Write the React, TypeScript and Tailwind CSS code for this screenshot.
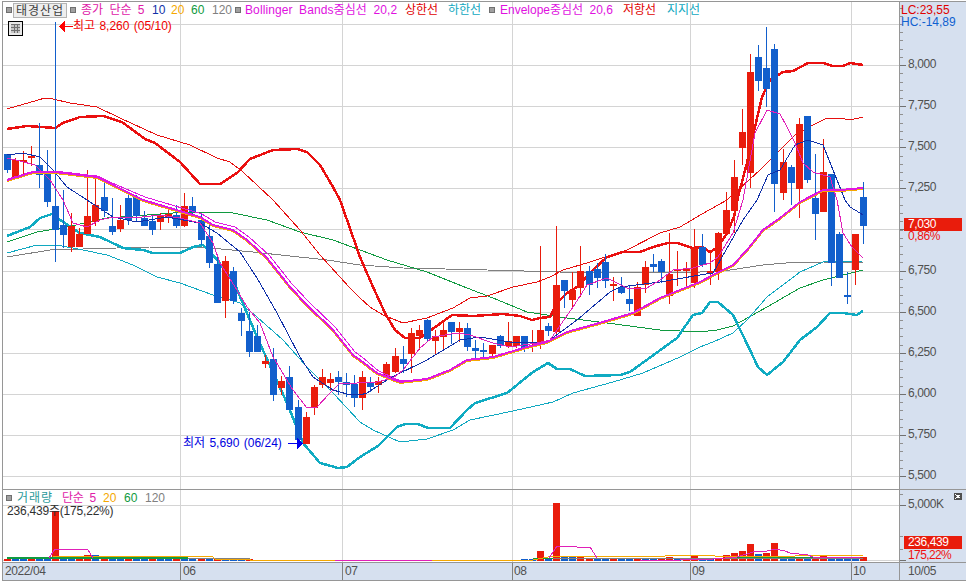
import React from "react";

type C = [number, 0 | 1, number, number, number, number];
// x, 1=red 0=blue, wick top, body top, body bottom, wick bottom
const candles: C[] = [
  [7,0,154,154,170,173],[15,1,158,160,178,178],[23,1,151,160,162,177],[31,1,146,156,158,166],[39,0,123,165,175,188],[47,0,150,174,202,207],
  [55,0,22,206,230,262],[63,0,190,225,235,248],[71,1,213,226,247,252],[79,1,228,234,247,247],[87,1,170,216,234,234],[95,1,177,205,222,226],
  [104,0,182,197,211,217],[112,0,198,226,232,235],[120,1,205,220,229,232],[128,0,195,198,220,225],[136,0,195,197,216,221],[144,0,211,218,226,226],
  [152,0,215,221,230,235],[160,1,213,216,222,230],[168,1,208,214,217,223],[176,0,205,215,226,228],[184,1,193,206,226,227],[192,0,197,206,212,214],
  [201,0,213,220,240,245],[209,0,225,236,263,268],[217,0,256,264,303,303],[225,1,256,261,301,318],[233,0,267,271,301,304],[241,0,308,313,321,336],
  [249,0,312,331,352,357],[257,0,325,336,352,352],[265,1,355,361,364,368],[273,0,348,359,395,401],[281,1,376,381,388,395],[289,0,366,377,410,410],
  [298,0,400,407,440,440],[306,1,412,417,444,444],[314,1,385,387,408,415],[322,1,369,377,385,388],[330,1,373,379,383,390],[338,0,371,377,382,395],
  [346,0,373,382,385,397],[354,0,375,384,398,407],[362,1,371,377,398,410],[370,0,377,382,387,392],[378,1,377,381,385,393],[386,1,362,364,377,380],
  [395,1,348,356,372,373],[403,0,346,359,364,373],[411,1,328,333,354,373],[419,1,325,330,336,350],[427,0,319,320,339,342],[435,1,330,336,341,354],
  [443,1,320,330,337,349],[451,0,322,322,332,344],[459,1,322,328,332,342],[467,0,323,328,347,351],[475,0,340,348,351,359],[483,0,343,350,352,360],
  [492,1,345,345,354,357],[500,0,335,336,346,348],[508,1,322,341,346,348],[516,1,336,336,346,348],[524,0,336,336,349,352],[532,1,330,345,347,352],
  [540,1,246,330,343,349],[548,0,323,326,331,336],[556,1,226,285,332,336],[564,0,280,280,291,308],[572,1,272,290,300,308],[580,1,246,271,288,297],
  [589,0,266,271,285,295],[597,0,263,269,278,288],[605,0,254,262,281,288],[613,1,277,284,286,301],[621,0,277,287,293,294],[629,0,286,299,304,311],
  [637,1,282,287,316,316],[645,1,261,267,285,293],[653,0,254,264,267,272],[661,0,259,261,272,283],[669,1,233,274,296,304],[677,1,251,269,271,286],
  [686,1,262,269,271,287],[694,1,229,248,283,288],[702,0,234,247,265,267],[710,1,250,271,273,285],[718,1,232,233,272,280],[726,1,192,210,234,234],
  [734,1,160,177,211,233],[742,1,109,132,148,165],[750,1,54,72,173,188],[758,0,45,57,81,91],[766,0,27,68,89,107],[774,0,44,49,184,212],
  [783,1,149,162,193,200],[791,0,165,167,183,205],[799,1,118,124,189,218],[807,0,116,116,180,183],[815,0,154,198,214,240],[823,1,139,172,212,212],
  [831,0,174,174,263,286],[839,0,232,234,278,278],[847,0,272,295,296,304],[855,1,234,234,270,285],[863,0,182,197,226,244],
];

const RED = "#e91c0c";
const BLUE = "#125fcc";

const lines = {
  redThick: "7,129 27,126 55,128 63,123 80,117 103,116 122,122 145,139 155,143 180,162 200,184 220,184 237,173 250,159 273,150 297,149 307,152 320,165 333,187 340,200 360,257 373,287 385,313 395,330 405,338 420,338 452,315 473,316 503,314 520,316 532,320 540,318 550,317 557,303 567,293 577,287 593,270 607,257 623,252 640,252 653,247 668,243 677,243 693,248 702,247 710,252 718,247 726,235 734,217 738,197 747,163 755,127 762,97 770,80 783,72 793,71 808,63 823,63 833,66 843,66 850,63 863,65",
  redThin: "7,109 45,98 53,99 70,103 97,107 120,118 157,135 190,145 217,158 230,162 243,172 273,200 300,230 320,255 350,288 360,298 370,307 383,315 403,323 427,318 453,308 470,298 487,296 513,287 537,282 550,277 563,270 590,262 627,250 660,233 680,227 702,214 727,200 738,190 760,170 780,150 795,135 813,125 827,118 840,118 850,120 863,117",
  center: "7,180 33,172 55,172 97,177 107,182 143,200 200,217 213,225 233,230 247,240 267,258 290,287 307,305 333,330 353,355 360,360 377,373 400,382 427,379 450,370 467,360 493,357 527,347 547,342 567,332 603,322 633,313 660,298 680,290 700,282 713,275 733,265 747,250 763,230 780,218 800,202 823,190 840,190 863,188",
  ma5: "7,158 20,161 35,165 50,180 63,200 73,223 87,227 100,220 113,217 133,218 160,215 180,218 200,223 213,243 220,263 237,290 247,307 260,323 273,357 293,390 307,408 317,407 330,393 340,383 357,383 377,382 393,378 403,370 420,348 433,337 457,333 470,335 493,343 510,347 537,343 550,340 573,307 587,285 607,278 627,288 647,288 660,280 673,270 693,268 710,263 718,257 733,233 743,200 755,133 767,110 780,114 787,127 795,143 803,163 813,172 830,177 837,200 843,233 852,247 863,258",
  ma10: "7,155 23,153 40,157 53,170 67,187 87,200 113,217 137,222 167,217 200,223 217,233 240,252 257,278 277,313 300,357 313,377 333,390 347,394 360,395 367,393 390,378 427,360 460,340 480,337 510,342 547,342 577,320 610,292 620,287 660,282 700,275 713,273 730,243 743,220 757,200 768,175 780,170 795,145 808,140 823,145 833,170 845,200 850,207 860,213 863,215",
  ma60: "7,242 37,232 67,227 107,218 147,215 187,212 233,213 267,220 300,232 333,240 360,250 387,260 427,272 467,288 493,298 527,312 567,318 607,323 660,330 700,332 717,330 733,326 767,307 800,288 823,280 863,270",
  ma120: "7,257 50,250 117,248 150,247 200,247 253,252 327,260 360,265 403,268 487,270 560,272 700,272 730,270 763,265 797,262 823,262 863,263",
  cyanThin: "7,253 37,245 57,245 83,250 107,255 133,265 157,277 180,283 213,295 240,303 257,317 283,340 307,367 333,393 360,422 373,430 400,442 427,439 453,430 470,420 513,411 553,402 573,393 613,382 643,373 680,357 700,347 713,342 733,333 747,320 767,297 800,272 823,262 863,261",
  cyanThick: "7,236 30,227 40,218 52,214 63,222 80,233 100,237 123,248 143,250 153,253 180,253 193,247 203,245 213,255 233,280 257,337 287,403 303,443 320,463 338,468 347,467 360,457 378,446 397,427 405,424 418,424 428,428 450,428 467,410 475,403 507,393 533,372 548,363 557,369 570,369 585,376 620,375 630,372 677,338 693,315 702,313 710,302 718,302 733,315 750,350 758,367 767,375 783,362 800,340 817,327 830,313 843,313 857,315 863,311",
};

const pts = (s: string) => s.split(" ").map((p) => p.split(",").map(Number));
const shift = (s: string, dy: number) => pts(s).map(([a, b]) => `${a},${b + dy}`).join(" ");
// the upper magenta line runs apart from the thick one on the left and merges with it past x=400
const upper = (s: string) =>
  pts(s)
    .map(([a, b]) => {
      const k = a < 130 ? 0.3 : a < 360 ? 1 : a < 420 ? (420 - a) / 60 : 0;
      return `${a + 2 * k},${b - 3 * k}`;
    })
    .join(" ");

const gridX = [180, 342, 512, 690, 851];
const gridY = [24, 65, 106, 147, 188, 229, 271, 312, 353, 394, 435, 476];

function Line({ p, c, w }: { p: string; c: string; w: number }) {
  return <polyline points={p} fill="none" stroke={c} strokeWidth={w} shapeRendering="crispEdges" />;
}

function PriceChart() {
  return (
    <svg viewBox="3 2 896 487" className="block w-[896px] h-[487px]">
      <g shapeRendering="crispEdges">
        {gridY.map((y) => <rect key={y} x={3} y={y} width={896} height={1} fill="#d4d4d4" />)}
        {gridX.map((x) => <rect key={x} x={x} y={2} width={1} height={487} fill="#d4d4d4" />)}
      </g>
      <Line p={lines.ma120} c="#808080" w={1} />
      <Line p={lines.ma60} c="#109a40" w={1} />
      <Line p={lines.cyanThin} c="#10a8c0" w={1} />
      <Line p={lines.redThin} c="#e60f0f" w={1} />
      <Line p={lines.redThick} c="#ea1010" w={2.5} />
      <Line p={lines.cyanThick} c="#10abc2" w={2.5} />
      <g shapeRendering="crispEdges">
        {candles.map(([x, r, wt, bt, bb, wb]) => (
          <g key={x} fill={r ? RED : BLUE}>
            <rect x={x} y={wt} width={1} height={wb - wt} />
            <rect x={x - 3} y={bt} width={7} height={Math.max(bb - bt, 2)} />
          </g>
        ))}
      </g>
      <Line p={lines.ma10} c="#1030a8" w={1} />
      <Line p={lines.ma5} c="#e020b8" w={1} />
      <Line p={shift(lines.center, 1)} c="#f5a800" w={2} />
      <Line p={lines.center} c="#e018e0" w={2} />
      <Line p={upper(lines.center)} c="#e018e0" w={1} />
      <g shapeRendering="crispEdges">
        <rect x={63} y={26} width={10} height={1} fill="#ff0000" />
        <polygon points="59,26.5 65,21 65,32" fill="#ff0000" />
        <rect x={288} y={443} width={10} height={1} fill="#0000ee" />
        <polygon points="303,443.5 297,438 297,449" fill="#0000ee" />
      </g>
    </svg>
  );
}

const volSpecial: Record<number, [number, number]> = {
  55: [1, 511], 540: [1, 551], 556: [1, 503], 564: [0, 557], 572: [0, 557], 580: [1, 557], 87: [1, 555], 95: [0, 555], 217: [1, 558], 225: [0, 558],
  669: [1, 557], 694: [1, 556], 702: [0, 559], 710: [0, 559], 718: [1, 559], 726: [1, 555], 734: [1, 553], 742: [1, 551], 750: [1, 544], 758: [0, 554], 766: [1, 553], 774: [1, 543],
  783: [0, 558], 791: [0, 558], 799: [1, 558], 807: [0, 558], 815: [1, 558], 823: [1, 556], 831: [0, 558], 839: [0, 558], 847: [0, 558], 855: [0, 559], 863: [1, 557],
};

function VolumeChart() {
  return (
    <svg viewBox="3 490 896 72" className="block w-[896px] h-[72px]">
      <g shapeRendering="crispEdges">
        <rect x={3} y={505} width={896} height={1} fill="#d4d4d4" />
        <rect x={3} y={560} width={896} height={1} fill="#d4d4d4" />
        {gridX.map((x) => <rect key={x} x={x} y={490} width={1} height={72} fill="#d4d4d4" />)}
        {candles.map(([x], i) => {
          const s = volSpecial[x];
          if (x > 250 && x < 520 && !s) return (
            <rect key={x} x={x - 3} y={560} width={7} height={1} fill={i % 3 === 0 ? RED : BLUE} />
          );
          const red = s ? s[0] === 1 : (i * 7) % 3 === 0;
          const top = s ? s[1] : 559;
          return <rect key={x} x={x - 3} y={top} width={7} height={561 - top} fill={red ? RED : BLUE} />;
        })}
        <rect x={7} y={558} width={243} height={1} fill="#808080" />
        <rect x={533} y={558} width={330} height={1} fill="#808080" />
        <rect x={7} y={557} width={181} height={2} fill="#109a40" />
        <rect x={533} y={558} width={20} height={1} fill="#109a40" />
        <rect x={735} y={557} width={80} height={1} fill="#109a40" />
      </g>
      <Line p="53,556 212,556 215,559 250,559 250,560 533,560 553,556 665,556 667,555 713,555 715,556 795,556 797,555 863,555" c="#f5a800" w={1} />
      <Line p="49,558 55,549 83,549 88,550 93,558" c="#e020b8" w={1} />
      <Line p="335,560 432,560" c="#e020b8" w={1} />
      <Line p="549,558 557,546 568,546 577,547 590,547 597,558" c="#e020b8" w={1} />
      <Line p="640,560 680,560 713,559 737,557 753,552 767,551 775,549 785,551 790,553 808,555 813,557 860,557" c="#e020b8" w={1} />
    </svg>
  );
}

function Sq() {
  return <div className="w-[6px] h-[6px] bg-[#a0a0a0] border border-[#707070] shrink-0" />;
}

function Legend() {
  return (
    <div className="absolute left-[3px] top-0 flex items-center h-[16px] text-[12px] leading-[14px] whitespace-nowrap [word-spacing:3px]">
      <Sq />
      <span className="ml-[1px] w-[54px] h-[15px] bg-[#eeeeee] border border-[#b4b4b4] text-[#404040] text-center tracking-[1px]">태경산업</span>
      <div className="ml-[3px]"><Sq /></div>
      <span className="ml-[5px] w-[71px] text-[#e020a8]">종가 단순 5</span>
      <span className="w-[19px] text-[#1030a8]">10</span>
      <span className="w-[20px] text-[#f5a800]">20</span>
      <span className="w-[21px] text-[#109a40]">60</span>
      <span className="w-[23px] text-[#808080]">120</span>
      <Sq />
      <span className="ml-[4px] w-[160px] text-[#e010e0] tracking-[0.1px]">Bollinger Bands중심선 20,2</span>
      <span className="w-[43px] text-[#e00000]">상한선</span>
      <span className="w-[41px] text-[#10a8c0]">하한선</span>
      <Sq />
      <span className="ml-[5px] w-[123px] text-[#e010e0]">Envelope중심선 20,6</span>
      <span className="w-[44px] text-[#e00000]">저항선</span>
      <span className="text-[#10a8c0]">지지선</span>
    </div>
  );
}

function GridIcon() {
  return (
    <div className="absolute left-[5px] top-[19px] w-[15px] h-[15px] border border-black bg-[#e8e8e8] p-[2px]">
      <svg viewBox="0 0 9 9" className="block w-[9px] h-[9px]" shapeRendering="crispEdges">
        <rect width="9" height="9" fill="#c4c4c4" />
        <path d="M0 0.5H9M0 3.5H9M0 6.5H9M3 0V9M6 0V9" stroke="#707070" strokeWidth="1" fill="none" />
      </svg>
    </div>
  );
}

function Ticks({ ys, minor }: { ys: number[]; minor: number[] }) {
  return (
    <svg viewBox="0 0 8 600" className="absolute left-0 top-0 w-[8px] h-[600px]" shapeRendering="crispEdges">
      {minor.map((y) => <rect key={`m${y}`} x={0} y={y} width={3} height={1} fill="#909090" />)}
      {ys.map((y) => <rect key={y} x={0} y={y} width={6} height={1} fill="#707070" />)}
    </svg>
  );
}

const priceLabels: [string, string][] = [
  ["8,000", "top-[54px]"], ["7,750", "top-[95px]"], ["7,500", "top-[136px]"], ["7,250", "top-[177px]"],
  ["6,750", "top-[260px]"], ["6,500", "top-[301px]"], ["6,250", "top-[342px]"], ["6,000", "top-[383px]"], ["5,750", "top-[424px]"], ["5,500", "top-[465px]"],
];

const minorY: number[] = [];
for (let i = 0; i < 58; i++) { const y = Math.round(24 - 8.22 * 2 + 8.22 * i); if (y >= 6 && y < 487) minorY.push(y - 2); }

export default function App() {
  return (
    <div className="w-[966px] h-[581px] bg-white overflow-hidden pt-[1px] pl-[2px] text-[12px] [font-family:'Liberation_Sans','Noto_Sans_CJK_KR',sans-serif]">
      <div className="w-[964px] h-[580px] border-t border-l border-[#969696] flex flex-col">
        {/* price row */}
        <div className="flex h-[488px] border-b border-[#969696]">
          <div className="relative w-[896px] h-[487px]">
            <PriceChart />
            <Legend />
            <GridIcon />
            <span className="absolute left-[70px] top-[16px] text-[#f00000] leading-[16px] whitespace-nowrap [word-spacing:1px]">최고 8,260 (05/10)</span>
            <span className="absolute left-[180px] top-[433px] text-[#0000e0] leading-[16px] whitespace-nowrap [word-spacing:1px]">최저 5,690 (06/24)</span>
          </div>
          <div className="relative flex-1 bg-[#d6e0ef] border-l border-[#969696]">
            <Ticks ys={[63, 104, 145, 186, 227, 269, 310, 351, 392, 433, 474]} minor={minorY} />
            <div className="absolute left-[1px] top-[2px] leading-[12px] text-[#e00000] whitespace-nowrap">LC:23,55</div>
            <div className="absolute left-[1px] top-[14px] leading-[12px] text-[#1060d0] whitespace-nowrap">HC:-14,89</div>
            {priceLabels.map(([t, c]) => (
              <span key={t} className={`absolute left-[8px] leading-[16px] text-[#505050] tracking-[-0.4px] ${c}`}>{t}</span>
            ))}
            <div className="absolute left-[4px] top-[216px] w-[58px] h-[13px] bg-[#e91c0c] text-white leading-[13px] pl-[4px] tracking-[-0.4px]">7,030</div>
            <div className="absolute left-[8px] top-[229px] leading-[11px] text-[#f01010] tracking-[-0.4px]">0,86%</div>
          </div>
        </div>
        {/* volume row */}
        <div className="flex h-[73px] border-b border-[#969696]">
          <div className="relative w-[896px] h-[72px]">
            <VolumeChart />
            <div className="absolute left-[3px] top-[1px] flex items-center h-[14px] leading-[14px] whitespace-nowrap [word-spacing:3px]">
              <Sq />
              <span className="ml-[5px] w-[45px] text-[#2a9a9a] tracking-[1px]">거래량</span>
              <span className="w-[41px] text-[#e020a8] tracking-[-0.3px]">단순 5</span>
              <span className="w-[21px] text-[#f5a800]">20</span>
              <span className="w-[21px] text-[#109a40]">60</span>
              <span className="text-[#808080]">120</span>
            </div>
            <span className="absolute left-[4px] top-[15px] leading-[12px] text-[#303030] whitespace-nowrap tracking-[-0.2px]">236,439주(175,22%)</span>
          </div>
          <div className="relative flex-1 bg-[#d6e0ef] border-l border-[#969696] overflow-hidden">
            <svg viewBox="0 0 8 72" className="absolute left-0 top-0 w-[8px] h-[72px]" shapeRendering="crispEdges">
              <rect y="4" width="3" height="1" fill="#909090" />
              <rect y="15" width="6" height="1" fill="#707070" />
              <rect y="46" width="3" height="1" fill="#909090" />
              <rect y="59" width="3" height="1" fill="#909090" />
              <rect y="70" width="6" height="1" fill="#707070" />
            </svg>
            <span className="absolute left-[8px] top-[6px] leading-[16px] text-[#505050] tracking-[-0.4px]">5,000K</span>
            <div className="absolute left-[54px] top-[3px] w-[8px] h-[7px] bg-[#505050] flex items-center justify-center">
              <svg viewBox="0 0 6 5" className="w-[6px] h-[5px]" shapeRendering="crispEdges"><path d="M0.5 0.5L5.5 4.5M5.5 0.5L0.5 4.5" stroke="#ffffff" strokeWidth="1" /></svg>
            </div>
            <div className="absolute left-[4px] top-[46px] w-[58px] h-[13px] bg-[#e91c0c] text-white leading-[13px] pl-[4px] tracking-[-0.4px]">236,439</div>
            <div className="absolute left-[4px] top-[59px] pl-[4px] leading-[12px] text-[#f01010] tracking-[-0.6px]">175,22%</div>
          </div>
        </div>
        {/* date axis */}
        <div className="flex h-[18px] border-b border-[#969696] bg-[#d6e0ef] text-[#505050] leading-[16px] tracking-[-0.4px]">
          <div className="w-[177px] pl-[2px]">2022/04</div>
          <div className="w-[162px] border-l border-[#808080] pl-[2px]">06</div>
          <div className="w-[170px] border-l border-[#808080] pl-[2px]">07</div>
          <div className="w-[178px] border-l border-[#808080] pl-[1px]">08</div>
          <div className="w-[161px] border-l border-[#808080] pl-[1px]">09</div>
          <div className="w-[48px] border-l border-[#808080] pl-[1px]">10</div>
          <div className="flex-1 border-l border-[#969696] pl-[8px]">10/05</div>
        </div>
      </div>
    </div>
  );
}
